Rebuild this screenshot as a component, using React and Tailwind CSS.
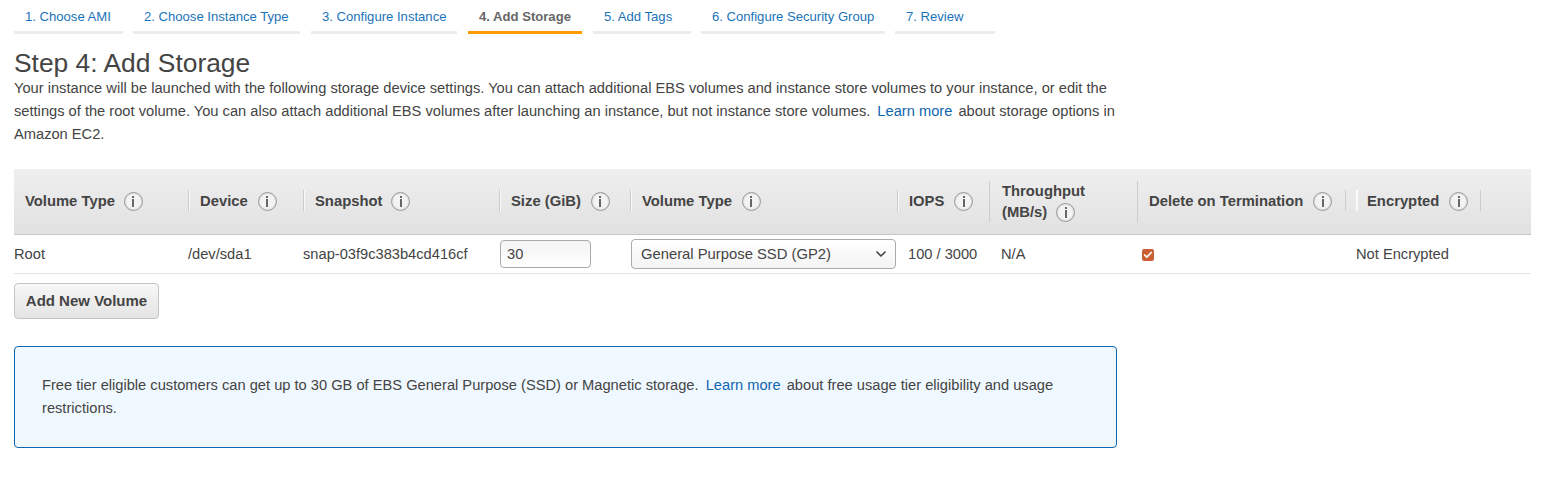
import React from "react";
import { ChevronDown, Check } from "lucide-react";

const steps = [
  { label: "1. Choose AMI", width: "w-[109px]" },
  { label: "2. Choose Instance Type", width: "w-[167px] mr-px" },
  { label: "3. Configure Instance", width: "w-[146px] mr-px" },
  { label: "4. Add Storage", width: "w-[114px] mr-px", active: true },
  { label: "5. Add Tags", width: "w-[98px]" },
  { label: "6. Configure Security Group", width: "w-[184px]" },
  { label: "7. Review", width: "w-[100px]" },
];

const gridCols = "grid grid-cols-[174px_115px_196px_131px_267px_92px_148px_219px_175px]";

function InfoIcon() {
  return (
    <span className="flex w-[19px] h-[19px] shrink-0 rounded-full border border-[#999] bg-[#f3f3f3] items-center justify-center shadow-[inset_0_0_2px_#bbb]">
      <span className="flex flex-col items-center gap-[1px]">
        <span className="block w-[2px] h-[2px] bg-[#666]" />
        <span className="block w-[2px] h-[8px] bg-[#666]" />
      </span>
    </span>
  );
}

function HeaderCell({ children, pad = "pl-[12px]", sep = true }) {
  return (
    <div className={`relative flex items-center ${pad}`}>
      {sep && <span className="absolute left-0 top-[21px] h-[21px] w-[2px] border-l border-[#ccc] bg-white/70" />}
      {children}
    </div>
  );
}

export default function App() {
  return (
    <div className="w-[1564px] h-[483px] bg-white text-[#444] text-[14.67px] leading-[23px] font-['Liberation_Sans',Arial,sans-serif] px-[14px] overflow-hidden">
      {/* Wizard tabs */}
      <div className="flex gap-[10px] h-[34px]">
        {steps.map((s) => (
          <div
            key={s.label}
            className={`${s.width} h-[34px] pl-[11px] pt-[5px] text-[13.1px] leading-[23px] whitespace-nowrap border-b-[3px] ${
              s.active ? "border-[#f90] text-[#666] font-bold" : "border-[#eaeded] text-[#1a73b8]"
            }`}
          >
            {s.label}
          </div>
        ))}
      </div>

      <h1 className="mt-[15px] text-[26.4px] leading-[28.4px] font-normal text-[#444]">Step 4: Add Storage</h1>
      <p className="w-[1103px]">
        Your instance will be launched with the following storage device settings. You can attach additional EBS volumes and instance store volumes to your instance, or edit the settings of the root volume. You can also attach additional EBS volumes after launching an instance, but not instance store volumes.{" "}
        <span className="text-[#0f66b0] ml-[3px] mr-[2px]">Learn more</span> about storage options in Amazon EC2.
      </p>

      {/* Storage table */}
      <div className="mt-[22.6px] w-[1517px]">
        <div className={`${gridCols} h-[66px] bg-gradient-to-b from-[#efefef] to-[#e1e1e1] border-b border-[#c6c6c6] font-bold text-[14.8px] text-[#444]`}>
          <HeaderCell pad="pl-[11px]" sep={false}>
            <span>Volume Type</span><span className="ml-[9px]"><InfoIcon /></span>
          </HeaderCell>
          <HeaderCell>
            <span>Device</span><span className="ml-[10px]"><InfoIcon /></span>
          </HeaderCell>
          <HeaderCell>
            <span>Snapshot</span><span className="ml-[9px]"><InfoIcon /></span>
          </HeaderCell>
          <HeaderCell>
            <span>Size (GiB)</span><span className="ml-[10px]"><InfoIcon /></span>
          </HeaderCell>
          <HeaderCell>
            <span>Volume Type</span><span className="ml-[10px]"><InfoIcon /></span>
          </HeaderCell>
          <HeaderCell>
            <span>IOPS</span><span className="ml-[10px]"><InfoIcon /></span>
          </HeaderCell>
          <div className="relative pl-[13px] pt-[12px] leading-[21px]">
            <span className="absolute left-0 top-[12px] h-[41px] w-px bg-[#ccc]" />
            <div>Throughput</div>
            <div className="flex items-center">
              <span>(MB/s)</span><span className="ml-[9px]"><InfoIcon /></span>
            </div>
          </div>
          <div className="relative flex items-center pl-[12px]">
            <span className="absolute left-0 top-[12px] h-[41px] w-px bg-[#ccc]" />
            <span>Delete on Termination</span><span className="ml-[10px]"><InfoIcon /></span>
            <span className="absolute left-[208px] top-[21px] h-[21px] w-px bg-[#ccc]" />
          </div>
          <div className="relative flex items-center pl-[11px]">
            <span className="absolute left-0 top-[21px] h-[21px] w-[2px] bg-white/80" />
            <span>Encrypted</span><span className="ml-[10px]"><InfoIcon /></span>
            <span className="absolute left-[124px] top-[21px] h-[21px] w-px bg-[#ccc]" />
          </div>
        </div>

        <div className={`${gridCols} h-[39px] items-center border-b border-[#e4e4e4] text-[#444]`}>
          <div className="pt-px">Root</div>
          <div className="pt-px">/dev/sda1</div>
          <div className="pt-px">snap-03f9c383b4cd416cf</div>
          <div>
            <div className="ml-[1px] w-[91px] h-[28px] px-[6px] leading-[26px] border border-[#aaa] rounded-[4px] bg-gradient-to-b from-[#f4f4f4] to-white">30</div>
          </div>
          <div>
            <div className="ml-[1px] w-[265px] h-[30px] pl-[9px] pr-[6px] flex items-center justify-between border border-[#aaa] rounded-[4px] bg-gradient-to-b from-white to-[#f4f4f4]">
              <span className="text-[14.8px] pt-px">General Purpose SSD (GP2)</span>
              <ChevronDown size={16} strokeWidth={2.5} className="text-[#444]" />
            </div>
          </div>
          <div className="pl-[11px] pt-px">100 / 3000</div>
          <div className="pl-[12px] pt-px">N/A</div>
          <div className="pl-[5px] pt-px">
            <span className="flex w-[12px] h-[12px] items-center justify-center rounded-[2px] bg-[#cb5f35]">
              <Check size={10} strokeWidth={4} className="text-white" />
            </span>
          </div>
          <div className="pt-px">Not Encrypted</div>
        </div>
      </div>

      <button className="mt-[9px] block w-[145px] h-[36px] border border-[#c4c4c4] rounded-[4px] bg-gradient-to-b from-[#f7f7f7] to-[#e4e4e4] font-bold text-[#444] text-[15px] pb-[2px]">
        Add New Volume
      </button>

      {/* Free tier note */}
      <div className="mt-[27px] w-[1103px] h-[102px] pt-[27px] pl-[27px] pr-[28px] border border-[#0f66b0] rounded-[4px] bg-[#f0f8ff]">
        Free tier eligible customers can get up to 30 GB of EBS General Purpose (SSD) or Magnetic storage.{" "}
        <span className="text-[#0f66b0] ml-[3px] mr-[2px]">Learn more</span> about free usage tier eligibility and usage restrictions.
      </div>
    </div>
  );
}
